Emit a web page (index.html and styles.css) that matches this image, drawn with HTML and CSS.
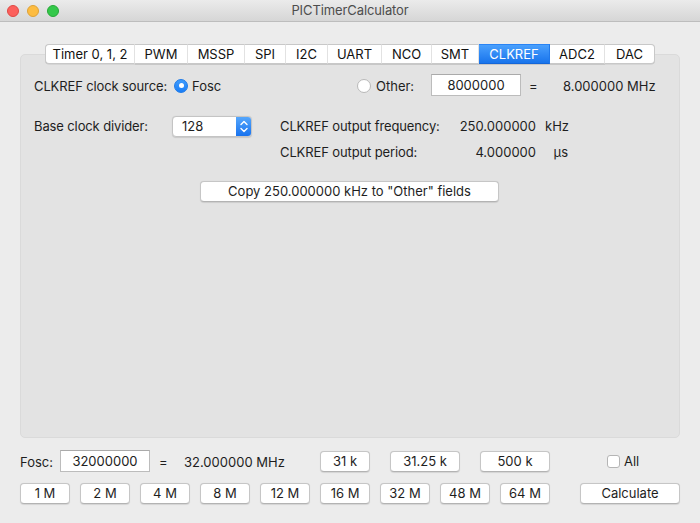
FILE: index.html
```html
<!DOCTYPE html>
<html>
<head>
<meta charset="utf-8">
<title>PICTimerCalculator</title>
<link rel="stylesheet" href="styles.css">
</head>
<body>
<div class="window">
  <header class="titlebar">
    <div class="lights">
      <span class="light red"></span>
      <span class="light yellow"></span>
      <span class="light green"></span>
    </div>
    <div class="title">PICTimerCalculator</div>
    <div></div>
  </header>

  <main class="main">
    <nav class="tabs">
      <span class="tab t-timer">Timer 0, 1, 2</span>
      <span class="tab t-pwm">PWM</span>
      <span class="tab t-mssp">MSSP</span>
      <span class="tab t-spi">SPI</span>
      <span class="tab t-i2c">I2C</span>
      <span class="tab t-uart">UART</span>
      <span class="tab t-nco">NCO</span>
      <span class="tab t-smt">SMT</span>
      <span class="tab t-clkref active">CLKREF</span>
      <span class="tab t-adc">ADC2</span>
      <span class="tab t-dac">DAC</span>
    </nav>

    <section class="panel">
      <div class="row source-row">
        <span class="label-col">CLKREF clock source:</span>
        <label class="choice fosc-choice"><span class="radio on"></span><span>Fosc</span></label>
        <label class="choice other-choice"><span class="radio"></span><span>Other:</span></label>
        <span class="field other-field">8000000</span>
        <span class="eq">=</span>
        <span class="val">8.000000 MHz</span>
      </div>

      <div class="row divider-row">
        <div class="divider-left">
          <span class="label-col">Base clock divider:</span>
          <div class="select">
            <span class="select-text">128</span>
            <span class="stepper">
              <svg width="16" height="21" viewBox="0 0 16 21"><path d="M5 8.5 L8 5.5 L11 8.5" fill="none" stroke="#fff" stroke-width="1.4" stroke-linecap="round" stroke-linejoin="round"/><path d="M5 12.5 L8 15.5 L11 12.5" fill="none" stroke="#fff" stroke-width="1.4" stroke-linecap="round" stroke-linejoin="round"/></svg>
            </span>
          </div>
        </div>
        <div class="out-grid">
          <span class="out-label">CLKREF output frequency:</span><span class="num">250.000000</span><span class="unit">kHz</span>
          <span class="out-label">CLKREF output period:</span><span class="num">4.000000</span><span class="unit">µs</span>
        </div>
      </div>

      <div class="copy-row">
        <button class="btn copy-btn">Copy 250.000000 kHz to "Other" fields</button>
      </div>
    </section>

    <section class="bottom">
      <div class="brow">
        <span class="fosc-label">Fosc:</span>
        <span class="field fosc-field">32000000</span>
        <span class="beq">=</span>
        <span class="bval">32.000000 MHz</span>
        <button class="btn w50">31 k</button>
        <button class="btn w70 gap20">31.25 k</button>
        <button class="btn w70 gap20">500 k</button>
        <label class="all"><span class="check"></span><span>All</span></label>
      </div>
      <div class="brow row2">
        <button class="btn w50">1 M</button>
        <button class="btn w50">2 M</button>
        <button class="btn w50">4 M</button>
        <button class="btn w50">8 M</button>
        <button class="btn w50">12 M</button>
        <button class="btn w50">16 M</button>
        <button class="btn w50">32 M</button>
        <button class="btn w50">48 M</button>
        <button class="btn w50">64 M</button>
        <button class="btn calc">Calculate</button>
      </div>
    </section>
  </main>
</div>
</body>
</html>
```

FILE: styles.css
```css
* { box-sizing: border-box; }
html, body { margin: 0; padding: 0; }
body {
  font-family: Inter, "Liberation Sans", Arial, sans-serif;
  font-size: 13px;
  color: #1e1e1e;
  background: #ececec;
}
.window {
  width: 700px;
  height: 523px;
  background: #ececec;
  overflow: hidden;
}
.titlebar {
  height: 22px;
  display: grid;
  grid-template-columns: 1fr auto 1fr;
  align-items: center;
  background: linear-gradient(#ebebeb, #d6d6d6);
  border-bottom: 1px solid #bdbdbd;
}
.lights { display: flex; gap: 8px; padding-left: 7px; }
.light {
  width: 12px; height: 12px; border-radius: 50%;
  display: block;
}
.red { background: #fc605c; border: 0.5px solid #df4944; }
.yellow { background: #fdbc40; border: 0.5px solid #dea236; }
.green { background: #34c84a; border: 0.5px solid #27a837; }
.title { color: #4d4d4d; font-size: 13px; line-height: 21px; letter-spacing: -0.1px; }

.main { padding: 22px 20px 0; }

.tabs {
  display: flex;
  justify-content: center;
  position: relative;
  z-index: 1;
  height: 20px;
}
.tab {
  height: 20px;
  line-height: 18px;
  text-align: center;
  background: #fff;
  border-top: 1px solid #c8c8c8;
  border-bottom: 1px solid #c8c8c8;
  border-right: 1px solid #e2e2e2;
  color: #111;
  box-shadow: 0 0.5px 0.5px rgba(0,0,0,0.12);
}
.tab:first-child { border-left: 1px solid #c8c8c8; border-radius: 4px 0 0 4px; }
.tab:last-child { border-right-color: #c8c8c8; border-radius: 0 4px 4px 0; }
.tab.active {
  background: linear-gradient(#4aa0fd, #1874ec);
  color: #fff;
  border-top-color: #2a84f4;
  border-bottom-color: #1466d8;
  border-right-color: #1f78ea;
}
.t-timer { width: 90px; }
.t-pwm { width: 53px; }
.t-mssp { width: 57px; }
.t-spi { width: 41px; }
.t-i2c { width: 42px; }
.t-uart { width: 54px; }
.t-nco { width: 50px; }
.t-smt { width: 47px; }
.t-clkref { width: 71px; }
.t-adc { width: 55px; }
.t-dac { width: 50px; }

.panel {
  margin-top: -10px;
  height: 384px;
  background: #e3e3e3;
  border: 1px solid #dadada;
  border-radius: 5px;
  padding: 19px 0 0 13px;
}

.row { display: flex; align-items: center; }
.source-row { height: 22px; padding-top: 1px; }
.label-col { width: 138px; flex: none; letter-spacing: -0.12px; }
.out-label { letter-spacing: -0.12px; }

.choice { display: flex; align-items: center; }
.fosc-choice { width: 185px; padding-left: 2px; }
.other-choice { width: 74px; }
.radio {
  width: 14px; height: 14px; border-radius: 50%;
  background: #fff;
  border: 1px solid #b9b9b9;
  margin-right: 4px;
  position: relative;
  flex: none;
}
.radio.on {
  background: linear-gradient(#3f9cfd, #1a7ef7);
  border-color: #1d7ae8;
}
.radio.on::after {
  content: "";
  position: absolute;
  left: 3.5px; top: 3.5px;
  width: 5px; height: 5px;
  border-radius: 50%;
  background: #fff;
}
.other-choice .radio { margin-right: 5px; }

.field {
  display: block;
  height: 22px;
  line-height: 20px;
  background: #fff;
  border: 1px solid #bcbcbc;
  border-top-color: #aaa;
  text-align: center;
  color: #222;
}
.other-field { width: 90px; margin-top: -2px; }
.eq { width: 42px; padding-left: 8px; }

.divider-row { margin-top: 17px; align-items: flex-start; }
.divider-left { display: flex; align-items: center; height: 26px; }
.select {
  width: 80px; height: 21px;
  display: flex;
  background: #fff;
  border: 1px solid #c4c4c4;
  border-radius: 4px;
  overflow: hidden;
  box-shadow: 0 0.5px 1px rgba(0,0,0,0.12);
}
.select-text { flex: 1; padding-left: 9px; line-height: 19px; }
.stepper {
  width: 16px;
  background: linear-gradient(#58a9fd, #1570ee);
  display: flex;
  align-items: center;
  justify-content: center;
  margin: -1px -1px -1px 0;
}
.out-grid {
  margin-left: 28px;
  display: grid;
  grid-template-columns: 169px 78px 23px;
  column-gap: 9px;
  grid-auto-rows: 26px;
  align-items: center;
}
.num { text-align: right; }
.unit { text-align: right; }

.copy-row { display: flex; justify-content: center; margin-top: 16px; padding-right: 14px; }
.btn {
  font-family: Inter, "Liberation Sans", Arial, sans-serif;
  font-size: 13px;
  color: #1e1e1e;
  background: #fff;
  border: 1px solid #c6c6c6;
  border-bottom-color: #b3b3b3;
  border-radius: 4px;
  height: 21px;
  padding: 0;
  line-height: 19px;
  box-shadow: 0 0.5px 1px rgba(0,0,0,0.1);
  text-align: center;
}
.copy-btn { width: 299px; }

.bottom { padding-top: 12px; }
.brow { display: flex; align-items: center; height: 22px; }
.fosc-label { width: 40px; padding-top: 1px; }
.fosc-field { width: 90px; }
.beq { width: 34px; padding-left: 9px; padding-top: 1px; }
.bval { width: 136px; padding-top: 1px; }
.w50 { width: 50px; }
.w70 { width: 70px; }
.gap20 { margin-left: 20px; }
.all { display: flex; align-items: center; margin-left: 57px; }
.check {
  width: 13px; height: 13px;
  background: #fff;
  border: 1px solid #b5b5b5;
  border-radius: 3px;
  margin-right: 4px;
}
.row2 { margin-top: 11px; height: 21px; gap: 10px; }
.calc { width: 100px; margin-left: 20px; }
```
